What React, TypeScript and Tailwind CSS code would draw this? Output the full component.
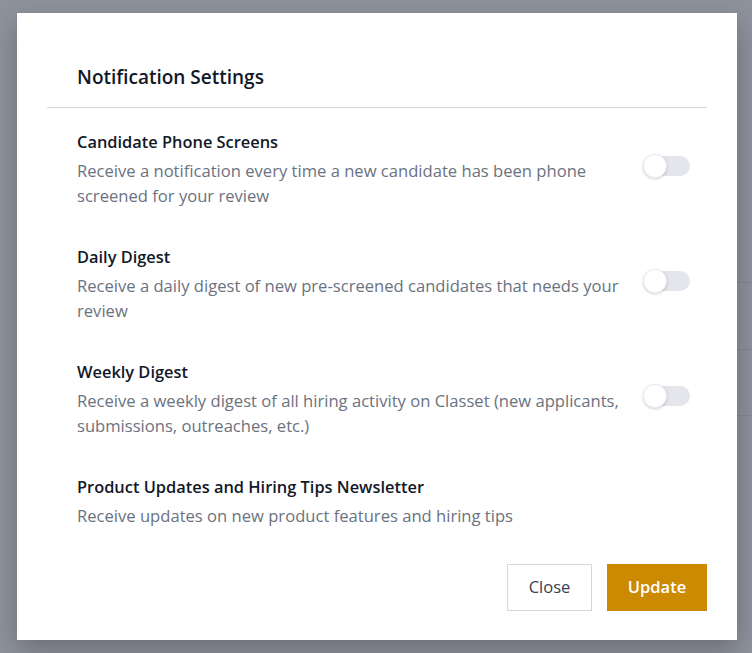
import { useState } from 'react';

type Setting = {
  id: string;
  title: string;
  description: string;
  toggle: boolean;
};

const SETTINGS: Setting[] = [
  {
    id: 'phone',
    title: 'Candidate Phone Screens',
    description: 'Receive a notification every time a new candidate has been phone screened for your review',
    toggle: true,
  },
  {
    id: 'daily',
    title: 'Daily Digest',
    description: 'Receive a daily digest of new pre-screened candidates that needs your review',
    toggle: true,
  },
  {
    id: 'weekly',
    title: 'Weekly Digest',
    description: 'Receive a weekly digest of all hiring activity on Classet (new applicants, submissions, outreaches, etc.)',
    toggle: true,
  },
  {
    id: 'newsletter',
    title: 'Product Updates and Hiring Tips Newsletter',
    description: 'Receive updates on new product features and hiring tips',
    toggle: false,
  },
];

function Toggle({ on, onChange }: { on: boolean; onChange: () => void }) {
  return (
    <button
      type="button"
      onClick={onChange}
      className={`relative w-[47px] h-[20px] rounded-full shrink-0 mb-[6px] transition-colors ${on ? 'bg-[#cc8a00]' : 'bg-[#e5e6eb]'}`}
    >
      <span
        className={`absolute top-1/2 -translate-y-1/2 w-[24px] h-[24px] rounded-full bg-white border border-[#eceef2] shadow-[0_1px_3px_rgba(0,0,0,0.18)] transition-all ${on ? 'left-[24px]' : 'left-0'}`}
      />
    </button>
  );
}

export default function App() {
  const [values, setValues] = useState<Record<string, boolean>>({});

  return (
    <div className="relative h-[653px] w-[752px] overflow-hidden bg-[#8e929c] font-['Open_Sans',sans-serif]">
      {/* page behind the overlay */}
      <div className="flex">
        <div className="w-[400px]" />
        <div className="flex-1 flex flex-col pt-[221px]">
          <div className="h-[61px] border-t border-[#8a8e97]" />
          <div className="h-[67px] border-t border-[#83878f]" />
          <div className="h-[66px] border-t border-[#83878f]" />
          <div className="border-t border-[#83878f]" />
        </div>
      </div>

      <div className="absolute inset-0 pl-[17px] pt-[13px]">
        <div className="w-[720px] h-[627px] bg-white shadow-[0_10px_25px_rgba(0,0,0,0.25)] flex flex-col">
          <div className="px-[60px] pt-[50px] pb-[16px]">
            <h2 className="text-[19px] leading-[28px] font-semibold text-[#111827]">Notification Settings</h2>
          </div>
          <div className="mx-[30px] border-t border-[#d6d7dc]" />

          <div className="pl-[60px] pr-[47px] pt-[22px] flex flex-col gap-[37px]">
            {SETTINGS.map(s => (
              <div key={s.id} className="flex items-center justify-between gap-4">
                <div className="w-[552px]">
                  <div className="text-[16.4px] leading-[24px] font-semibold text-[#111827]">{s.title}</div>
                  <p className="mt-1 text-[16.6px] leading-[25px] text-[#6b7280]">{s.description}</p>
                </div>
                {s.toggle && <Toggle on={!!values[s.id]} onChange={() => setValues(prev => ({ ...prev, [s.id]: !prev[s.id] }))} />}
              </div>
            ))}
          </div>

          <div className="mt-auto px-[30px] pb-[29px] flex justify-end gap-[15px]">
            <button className="w-[85px] h-[47px] border border-[#d5d7dd] bg-white text-[16.5px] font-medium text-[#374151]">Close</button>
            <button className="w-[100px] h-[47px] bg-[#cc8a00] text-[16.5px] font-semibold text-white">Update</button>
          </div>
        </div>
      </div>
    </div>
  );
}
